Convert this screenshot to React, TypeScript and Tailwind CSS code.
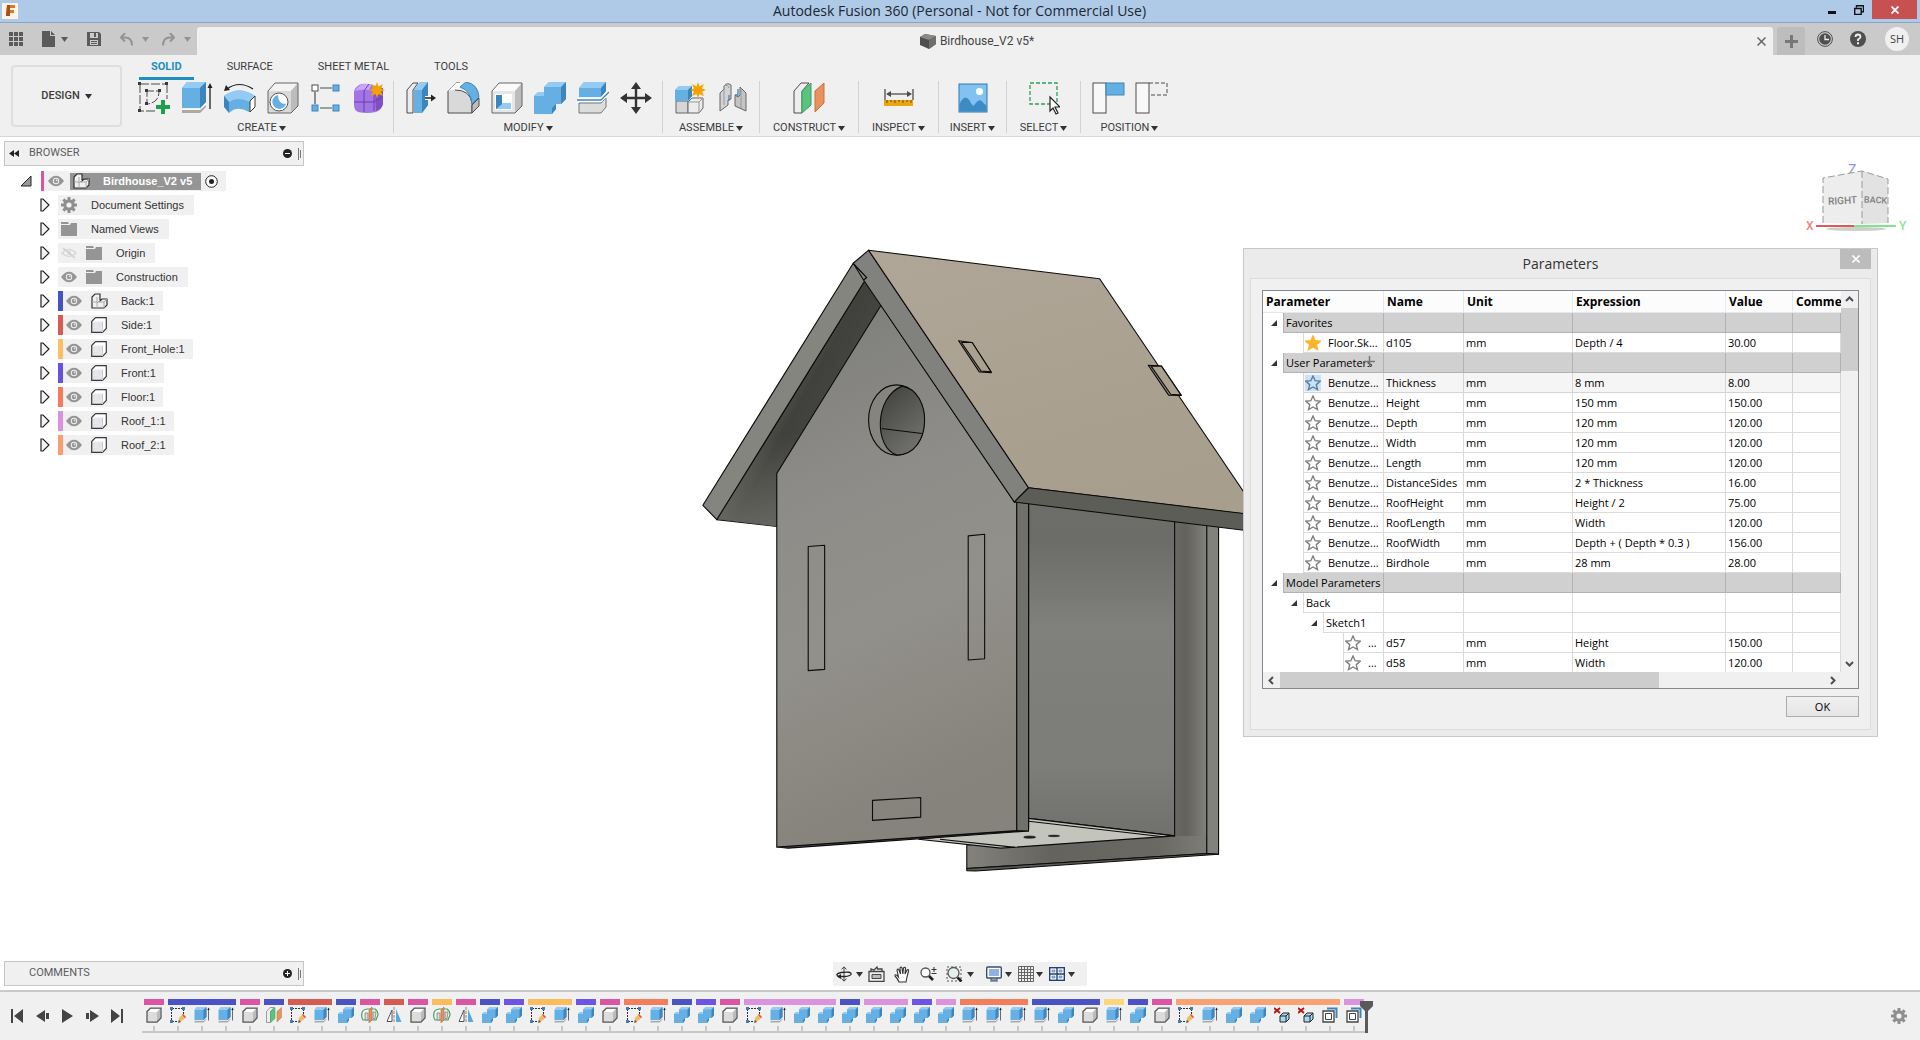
import React, { useState } from "react";

type IconProps = { size?: number };

interface ParamRow {
  kind: "group" | "node" | "param";
  depth: number;
  label: string;
  name?: string;
  expression?: string;
  value?: string;
  favorite?: boolean;
  hovered?: boolean;
}

const OUTLINE = "#4d4d4d";
const BLUE = "#65afe3";
const BLUE_LIGHT = "#93cbf5";
const BLUE_DARK = "#3d86bd";

const user = (name: string, expression: string, value: string, hovered = false): ParamRow => ({
  kind: "param",
  depth: 2,
  label: "Benutze...",
  name,
  expression,
  value,
  hovered,
});

const PARAMS: ParamRow[] = [
  { kind: "group", depth: 1, label: "Favorites" },
  { kind: "param", depth: 2, label: "Floor.Sk...", name: "d105", expression: "Depth / 4", value: "30.00", favorite: true },
  { kind: "group", depth: 1, label: "User Parameters" },
  user("Thickness", "8 mm", "8.00", true),
  user("Height", "150 mm", "150.00"),
  user("Depth", "120 mm", "120.00"),
  user("Width", "120 mm", "120.00"),
  user("Length", "120 mm", "120.00"),
  user("DistanceSides", "2 * Thickness", "16.00"),
  user("RoofHeight", "Height / 2", "75.00"),
  user("RoofLength", "Width", "120.00"),
  user("RoofWidth", "Depth + ( Depth * 0.3 )", "156.00"),
  user("Birdhole", "28 mm", "28.00"),
  { kind: "group", depth: 1, label: "Model Parameters" },
  { kind: "node", depth: 2, label: "Back" },
  { kind: "node", depth: 3, label: "Sketch1" },
  { kind: "param", depth: 4, label: "...", name: "d57", expression: "Height", value: "150.00" },
  { kind: "param", depth: 4, label: "...", name: "d58", expression: "Width", value: "120.00" },
];

/* ---------- small shared glyphs ---------- */

function Caret({ className = "" }: { className?: string }) {
  return (
    <svg width="7" height="5" viewBox="0 0 7 5" className={`shrink-0 ${className}`}>
      <path d="M0 0h7L3.5 5z" fill="currentColor" />
    </svg>
  );
}

function Eye({ hidden = false }: { hidden?: boolean }) {
  if (hidden) {
    return (
      <svg width="16" height="12" viewBox="0 0 16 12" className="shrink-0">
        <path d="M1 6Q8-1 15 6Q8 13 1 6Z" fill="none" stroke="#d8d8d8" strokeWidth="1.5" />
        <circle cx="8" cy="6" r="2" fill="#d8d8d8" />
        <path d="M2 1l12 10" stroke="#d0d0d0" strokeWidth="1.5" />
      </svg>
    );
  }
  return (
    <svg width="16" height="12" viewBox="0 0 16 12" className="shrink-0">
      <path d="M0 6Q8-4.500 16 6Q8 16.500 0 6Z" fill="#959595" />
      <circle cx="8" cy="6" r="3.2" fill="#f0f0f0" />
      <circle cx="8" cy="6" r="2.2" fill="#959595" />
      <circle cx="8.600" cy="5.400" r=".8" fill="#f0f0f0" />
    </svg>
  );
}

function Folder() {
  return (
    <svg width="16" height="14" viewBox="0 0 16 14" className="shrink-0">
      <path d="M0 0h7l1 2H0zM0 3h9l1-2h6v13H0z" fill="#959595" />
    </svg>
  );
}

function Gear({ size = 16 }: IconProps) {
  return (
    <svg width={size} height={size} viewBox="0 0 16 16" className="shrink-0">
      <circle cx="8" cy="8" r="4.2" fill="none" stroke="#8f8f8f" strokeWidth="3.2" />
      {[0, 45, 90, 135, 180, 225, 270, 315].map((a) => (
        <rect key={a} x="6.5" y="0" width="3" height="3.5" fill="#8f8f8f" transform={`rotate(${a} 8 8)`} />
      ))}
    </svg>
  );
}

function Cube() {
  return (
    <svg width="16" height="16" viewBox="0 0 16 16" className="shrink-0">
      <path d="M.7 4.5L4.5.7h10.800v10.800l-3.800 3.800H.7z" fill="#fff" />
      <path d="M.7 4.700h10.800v10.600H.7z" fill="#e4e4ea" />
      <path d="M.7 4.5L4.5.7h10.800v10.800l-3.800 3.800H.7z" fill="none" stroke="#3a3a3a" strokeWidth="1.2" />
      <path d="M11.5 4.700v10.600" fill="none" stroke="#c9c9c9" />
    </svg>
  );
}

function Assembly() {
  return (
    <svg width="17" height="17" viewBox="0 0 17 17" className="shrink-0">
      <path d="M1 4l3-3h5v6h4l3-1v6l-3 3H1z" fill="#f0f0f2" />
      <path d="M1 4l3-3h5v7l2-2h5v6l-3 3H1z" fill="none" stroke="#333" strokeWidth="1.2" />
      <path d="M1 9h5V4M6 9v6M7 9h6v6M9 7l-3 3M13 9l3-3" fill="none" stroke="#aaa" />
    </svg>
  );
}

/* ---------- ribbon icons ---------- */

function BlockShape({ front, top, side, stroke }: { front: string; top: string; side: string; stroke: string }) {
  return (
    <>
      <path d="M1 9l7-8h23v23l-7 7H1z" fill={front} />
      <path d="M1 9l7-8h23l-7 8z" fill={top} />
      <path d="M24 9l7-8v23l-7 7z" fill={side} />
      <path d="M1 9l7-8h23v23l-7 7H1z" fill="none" stroke={stroke} />
    </>
  );
}

function Burst() {
  return (
    <path
      d="M24 0l1.5 4.5L30 2l-2 4.5L32 8l-4 1.5 2 4.5-4.5-2L24 16l-1.5-4-4.500 2 2-4.500L16 8l4-1.500L18 2l4.500 2.500z"
      fill="#f5a100"
    />
  );
}

function SketchIcon({ size = 32 }: IconProps) {
  return (
    <svg width={size} height={size} viewBox="0 0 32 32">
      <path d="M2 2h27M2 2v27h16M29 2v15" fill="none" stroke={OUTLINE} strokeDasharray="9 2" />
      <path d="M8 9h13Q21 21 9 22V9" fill="none" stroke={OUTLINE} strokeDasharray="8 2" />
      <path d="M0 0h3v3H0zM27 0h3v3h-3zM0 27h3v3H0zM7 7h3v3H7zM20 7h3v3h-3zM7 20h3v3H7z" fill="#3a3a3a" />
      <path d="M23 18h4v5h5v4h-5v5h-4v-5h-5v-4h5z" fill="#1f9f4c" />
    </svg>
  );
}

function ExtrudeIcon({ size = 32 }: IconProps) {
  return (
    <svg width={size} height={size} viewBox="0 0 32 32">
      <path d="M1 27v4h18l6-6v-3l-6 5z" fill="#a9a9a9" />
      <path d="M1 27h18l6-6v2l-6 5H1z" fill="#fff" />
      <path d="M1 6l5-6h19v20l-6 6H1z" fill={BLUE} />
      <path d="M1 6l5-6h19l-6 6z" fill={BLUE_LIGHT} />
      <path d="M19 6l6-6v20l-6 6z" fill={BLUE_DARK} />
      <path d="M29 27V3" stroke="#222" strokeWidth="1.3" />
      <path d="M26.5 6L29 1l2.5 5z" fill="#222" />
    </svg>
  );
}

function RevolveIcon() {
  return (
    <svg width="34" height="32" viewBox="0 0 34 32">
      <path d="M1 14Q16 3 32 14l-1 13-5 3Q14 23 6 31l-4-8z" fill={BLUE} />
      <path d="M1 14Q16 3 32 14l-5 6Q15 14 6 20z" fill={BLUE_LIGHT} />
      <path d="M1 14l5 6v11l-5-6z" fill={BLUE_DARK} />
      <path d="M27 19l5-5v11l-5 5z" fill="#fff" stroke="#3a3a3a" />
      <path d="M4 7Q16-2 30 7" fill="none" stroke="#222" strokeWidth="1.2" />
      <path d="M1 9l2-6 4 5z" fill="#222" />
    </svg>
  );
}

function HoleIcon() {
  return (
    <svg width="32" height="32" viewBox="0 0 32 32">
      <BlockShape front="#d9d9d9" top="#f3f3f3" side="#bcbcbc" stroke="#666" />
      <circle cx="12" cy="20" r="9" fill="#fff" stroke="#555" />
      <path d="M11 13a7 7 0 1 0 8 9q-8 0-8-9z" fill={BLUE} />
    </svg>
  );
}

function PatternIcon() {
  return (
    <svg width="30" height="32" viewBox="0 0 30 32">
      <path d="M9 6h12M4 10v12M9 26h12" stroke={OUTLINE} strokeWidth="1.2" />
      <rect x="1" y="3" width="6" height="6" fill="#fff" stroke={OUTLINE} />
      <rect x="22" y="3" width="6" height="6" fill={BLUE} stroke={BLUE_DARK} />
      <rect x="1" y="23" width="6" height="6" fill={BLUE} stroke={BLUE_DARK} />
      <rect x="22" y="23" width="6" height="6" fill={BLUE} stroke={BLUE_DARK} />
    </svg>
  );
}

function FormIcon() {
  return (
    <svg width="32" height="32" viewBox="0 0 32 32">
      <path d="M1 11q0-5 5-8 4-2 10-1l14 4v16q-1 5-7 8-9 2-18 0-4-2-4-7z" fill="#a374e6" />
      <path d="M2 9q3-6 9-7h8l-3 6q-8-1-14 1z" fill="#c9a5f7" />
      <path d="M22 11q5-4 8-5v16q-1 5-7 7z" fill="#7f4fc4" />
      <path d="M1 20h20l9-6M11 9v21M11 9l5-7M21 11v18" fill="none" stroke="#6a3fb0" />
      <Burst />
    </svg>
  );
}

function PressPullIcon() {
  return (
    <svg width="32" height="32" viewBox="0 0 32 32">
      <path d="M2 8l6-7h5l-5 7v23H2z" fill="#ececec" stroke={OUTLINE} />
      <path d="M9 8l6-8h8v23l-6 8H9z" fill={BLUE} />
      <path d="M9 8l6-8h8l-6 8z" fill={BLUE_LIGHT} />
      <path d="M17 8l6-8v23l-6 8z" fill={BLUE_DARK} />
      <path d="M20 16h9" stroke="#fff" strokeWidth="4" />
      <path d="M20 16h8" stroke="#222" strokeWidth="1.5" />
      <path d="M26 12.5l5 3.5-5 3.5z" fill="#222" />
    </svg>
  );
}

function FilletIcon() {
  return (
    <svg width="33" height="32" viewBox="0 0 33 32">
      <path d="M1 9l8-8h4L8 8q15 0 17 13v10H1z" fill="#d9d9d9" stroke={OUTLINE} />
      <path d="M1 9l8-8h7l-5 6z" fill="#fff" />
      <path d="M13 5l6-5q12 2 13 15l-7 7Q24 9 13 5z" fill={BLUE} stroke={BLUE_DARK} />
      <path d="M25 23l7-7v8l-7 7z" fill="#bcbcbc" stroke={OUTLINE} />
    </svg>
  );
}

function ShellIcon() {
  return (
    <svg width="32" height="32" viewBox="0 0 32 32">
      <BlockShape front="#e6e6e6" top="#fafafa" side="#bcbcbc" stroke="#666" />
      <path d="M4 12h17v16H4z" fill="#fff" />
      <path d="M5 13h15v14H5z" fill={BLUE_LIGHT} />
      <path d="M5 13l6 6v3l-6 5z" fill={BLUE_DARK} />
      <path d="M11 13h9v8h-9z" fill="#fff" />
      <path d="M5 13h6v9l-6 5z" fill={BLUE_DARK} />
    </svg>
  );
}

function CombineIcon({ size = 32 }: IconProps) {
  return (
    <svg width={size} height={size} viewBox="0 0 32 32">
      <path d="M0 14l4-4h6V5l5-5h17v17l-5 5h-5v5l-4 5H0z" fill={BLUE} />
      <path d="M0 14l4-4h6v4zM10 5l5-5h17l-5 5z" fill={BLUE_LIGHT} />
      <path d="M27 5l5-5v17l-5 5zM18 26l4-4v5l-4 5z" fill={BLUE_DARK} />
    </svg>
  );
}

function SplitIcon() {
  return (
    <svg width="32" height="32" viewBox="0 0 32 32">
      <path d="M2 6l5-6h22v9l-5 6H2z" fill={BLUE} />
      <path d="M2 6l5-6h22l-5 6z" fill={BLUE_LIGHT} />
      <path d="M24 6l5-6v9l-5 6z" fill={BLUE_DARK} />
      <path d="M2 21h22l5-5v9l-5 6H2z" fill="#dcdcdc" stroke="#777" />
      <path d="M0 18h24l8-8" fill="none" stroke="#fff" strokeWidth="4" />
      <path d="M0 18h24l8-8" fill="none" stroke={BLUE_DARK} strokeWidth="1.3" />
    </svg>
  );
}

function MoveIcon() {
  return (
    <svg width="32" height="32" viewBox="0 0 32 32">
      <path d="M16 4v24M4 16h24" stroke="#333" strokeWidth="2.4" />
      <path d="M16 0l5 7H11zM16 32l5-7H11zM0 16l7-5v10zM32 16l-7-5v10z" fill="#333" />
    </svg>
  );
}

function NewComponentIcon() {
  return (
    <svg width="32" height="32" viewBox="0 0 32 32">
      <path d="M2 19h12v12H2z" fill="#d6d6d6" stroke="#666" />
      <path d="M14 20l4-4h11v10l-4 5H14z" fill="#ececec" stroke="#666" />
      <path d="M14 20h11v11M25 20l4-4" fill="none" stroke="#999" />
      <path d="M1 8l4-4h13v10l-4 5H1z" fill={BLUE} />
      <path d="M1 8l4-4h13l-4 4z" fill={BLUE_LIGHT} />
      <path d="M14 8l4-4v10l-4 5z" fill={BLUE_DARK} />
      <Burst />
    </svg>
  );
}

function JointIcon() {
  return (
    <svg width="32" height="32" viewBox="0 0 32 32">
      <path d="M3 11l4-4V4q3-4 7-1v14l-3 1v5l-8 6z" fill="#d3d3d3" stroke="#666" />
      <path d="M7 7v16M7 4q4-2 5 2" fill="none" stroke="#999" />
      <path d="M29 29l-11-5V13l3 2 2-2V5l6 6z" fill="#c4c4c4" stroke="#666" />
      <path d="M24 6v20" stroke="#999" />
      <path d="M12 13v6M21 7v6h-3" fill="none" stroke={BLUE_DARK} strokeWidth="1.3" />
    </svg>
  );
}

function PlaneIcon({ size = 32 }: IconProps) {
  return (
    <svg width={size} height={size} viewBox="0 0 32 32">
      <path d="M1 9l7-8h8l-7 8v22H1z" fill="#eee" stroke={OUTLINE} />
      <path d="M9 9l9-8v22l-9 8z" fill="#57c57e" stroke="#3d9b5f" />
      <path d="M22 9l9-8v20l-9 9z" fill="#e8925f" stroke="#c5723f" />
    </svg>
  );
}

function MeasureIcon() {
  return (
    <svg width="32" height="32" viewBox="0 0 32 32">
      <path d="M2 7v11M30 7v11" stroke={OUTLINE} strokeWidth="1.3" />
      <path d="M5 12h22" stroke={OUTLINE} strokeWidth="1.3" />
      <path d="M3 12l5-3v6zM29 12l-5-3v6z" fill={OUTLINE} />
      <rect x="1" y="18" width="29" height="6" fill="#eba412" />
      <path d="M4 18v3M8 18v2M12 18v3M16 18v2M20 18v3M24 18v2M28 18v3" stroke="#6b4a00" />
    </svg>
  );
}

function ImageIcon() {
  return (
    <svg width="32" height="32" viewBox="0 0 32 32">
      <rect x="2" y="2" width="28" height="28" fill="#82c2f2" stroke="#3576a6" />
      <circle cx="22.5" cy="9.5" r="3.5" fill="#fff" />
      <path d="M2.5 22q6-13 12 0l2 2q6-9 9-4l4 4v5.500h-27z" fill="#3c8bc4" />
    </svg>
  );
}

function SelectIcon() {
  return (
    <svg width="32" height="34" viewBox="0 0 32 34">
      <rect x="2" y="1" width="27" height="21" fill="none" stroke="#28a05a" strokeWidth="1.3" strokeDasharray="4 2" />
      <path d="M22 15v14l3-3 3 6 2-1-3-6h5z" fill="#fff" stroke="#222" strokeWidth="1.2" />
    </svg>
  );
}

function CaptureIcon({ reverted = false }: { reverted?: boolean }) {
  return (
    <svg width="33" height="32" viewBox="0 0 33 32">
      <rect x="1" y="1" width="13" height="30" fill="#f8f8f8" stroke={OUTLINE} />
      {reverted ? (
        <path d="M14 1h18v12H14" fill="none" stroke={OUTLINE} strokeDasharray="4 2" />
      ) : (
        <rect x="14" y="1" width="18" height="12" fill={BLUE} stroke={BLUE_DARK} />
      )}
    </svg>
  );
}

const RIBBON: { label: string; width: string; icons: React.ReactNode[] }[] = [
  {
    label: "CREATE",
    width: "w-[264px]",
    icons: [<SketchIcon />, <ExtrudeIcon />, <RevolveIcon />, <HoleIcon />, <PatternIcon />, <FormIcon />],
  },
  {
    label: "MODIFY",
    width: "w-[269px]",
    icons: [<PressPullIcon />, <FilletIcon />, <ShellIcon />, <CombineIcon />, <SplitIcon />, <MoveIcon />],
  },
  { label: "ASSEMBLE", width: "w-[97px]", icons: [<NewComponentIcon />, <JointIcon />] },
  { label: "CONSTRUCT", width: "w-[99px]", icons: [<PlaneIcon />] },
  { label: "INSPECT", width: "w-[80px]", icons: [<MeasureIcon />] },
  { label: "INSERT", width: "w-[68px]", icons: [<ImageIcon />] },
  { label: "SELECT", width: "w-[74px]", icons: [<SelectIcon />] },
  { label: "POSITION", width: "w-[97px]", icons: [<CaptureIcon />, <CaptureIcon reverted />] },
];

/* ---------- header ---------- */

function TitleBar() {
  return (
    <header className="flex h-[23px] items-center border-b border-[#86a6cc] bg-[#aecae7]">
      <div className="flex flex-1 pl-[2px]">
        <svg width="16" height="16" viewBox="0 0 16 16">
          <rect width="16" height="16" fill="#fdf3e6" />
          <path d="M5 2h8v3H8v2h4v3H8v3H4z" fill="#d9772b" />
          <path d="M5 2h3v11H4z" fill="#a94f14" />
        </svg>
      </div>
      <h1 className="font-['Open_Sans',sans-serif] text-[14px] leading-5 text-[#1c2733]">
        Autodesk Fusion 360 (Personal - Not for Commercial Use)
      </h1>
      <div className="flex flex-1 items-start justify-end self-stretch pr-[3px]">
        <button aria-label="Minimize" className="flex h-[19px] w-[26px] items-center justify-center">
          <svg width="8" height="8" viewBox="0 0 8 8">
            <path d="M0 5h8v3H0z" fill="#111" />
          </svg>
        </button>
        <button aria-label="Restore" className="flex h-[19px] w-[27px] items-center justify-center">
          <svg width="10" height="10" viewBox="0 0 10 10">
            <path d="M2.5 2.5V.7h7v6H7.5M.7 3.5h6.500v6H.7z" fill="none" stroke="#111" strokeWidth="1.4" />
          </svg>
        </button>
        <button aria-label="Close" className="flex h-[19px] w-[45px] items-center justify-center bg-[#c75050]">
          <svg width="8" height="8" viewBox="0 0 8 8">
            <path d="M.5.5l7 7M7.5.5l-7 7" stroke="#fff" strokeWidth="1.8" />
          </svg>
        </button>
      </div>
    </header>
  );
}

function QuickBar() {
  return (
    <div className="flex h-8 bg-[#cacaca]">
      <div className="flex w-[197px] items-center pl-[9px] text-[#5a5a5a]">
        <button aria-label="Data panel" className="mr-[19px]">
          <svg width="14" height="14" viewBox="0 0 14 14">
            <path
              d="M0 0h4v4H0zM5 0h4v4H5zM10 0h4v4h-4zM0 5h4v4H0zM5 5h4v4H5zM10 5h4v4h-4zM0 10h4v4H0zM5 10h4v4H5zM10 10h4v4h-4z"
              fill="currentColor"
            />
          </svg>
        </button>
        <button aria-label="File" className="mr-[19px] flex items-center gap-[6px]">
          <svg width="13" height="16" viewBox="0 0 13 16">
            <path d="M0 0h8v5h5v11H0zM9 0l4 4H9z" fill="currentColor" />
          </svg>
          <Caret />
        </button>
        <button aria-label="Save" className="mr-[19px]">
          <svg width="14" height="14" viewBox="0 0 14 14">
            <path d="M0 0h12l2 2v12H0zM3 1v5h8V1zM3 8v5h8V8z" fill="currentColor" fillRule="evenodd" />
            <path d="M7 1h2v4H7zM4 9h6v1H4zM4 11h6v1H4z" fill="currentColor" />
          </svg>
        </button>
        <button aria-label="Undo" className="mr-[13px] flex items-center gap-[9px] text-[#949494]">
          <svg width="13" height="13" viewBox="0 0 13 13">
            <path d="M5 0L1 4.500l4 4M1 4.500h4q7 0 7 8" fill="none" stroke="currentColor" strokeWidth="2" />
          </svg>
          <Caret />
        </button>
        <button aria-label="Redo" className="flex items-center gap-[9px] text-[#949494]">
          <svg width="13" height="13" viewBox="0 0 13 13">
            <path d="M8 0l4 4.500-4 4M12 4.500H8q-7 0-7 8" fill="none" stroke="currentColor" strokeWidth="2" />
          </svg>
          <Caret />
        </button>
      </div>
      <div className="mt-1 flex flex-1 items-center rounded-t-[3px] bg-[#f0f0f0] pr-[7px]">
        <div className="flex flex-1 items-center justify-center gap-1">
          <svg width="16" height="15" viewBox="0 0 16 15">
            <path d="M0 3l5-3 11 2v8l-7 5-9-4z" fill="#4f4f4f" />
            <path d="M0 3l5-3 11 2-7 4z" fill="#8a8a8a" />
            <path d="M9 6l7-4v8l-7 5z" fill="#6f6f6f" />
          </svg>
          <span className="font-['Roboto',sans-serif] text-[12px] text-[#444]">Birdhouse_V2 v5*</span>
        </div>
        <button aria-label="Close document">
          <svg width="9" height="9" viewBox="0 0 9 9">
            <path d="M.5.5l8 8M8.5.5l-8 8" stroke="#666" strokeWidth="1.5" />
          </svg>
        </button>
      </div>
      <div className="flex items-center pl-1">
        <button
          aria-label="New document"
          className="mr-3 mt-1 flex h-7 w-7 items-center justify-center rounded-t-[3px] bg-[#bdbdbd]"
        >
          <svg width="13" height="13" viewBox="0 0 13 13">
            <path d="M5 0h3v5h5v3H8v5H5V8H0V5h5z" fill="#777" />
          </svg>
        </button>
        <button aria-label="Job status" className="mr-[17px]">
          <svg width="16" height="16" viewBox="0 0 16 16">
            <circle cx="8" cy="8" r="7.4" fill="none" stroke="#4f4f4f" />
            <circle cx="8" cy="8" r="5.8" fill="#4f4f4f" />
            <path d="M8 4v4.500h4" fill="none" stroke="#eee" strokeWidth="1.3" />
          </svg>
        </button>
        <button aria-label="Help" className="mr-[19px]">
          <svg width="16" height="16" viewBox="0 0 16 16">
            <circle cx="8" cy="8" r="8" fill="#4f4f4f" />
            <path d="M5.5 6q0-2.500 2.500-2.500T10.5 6Q10.5 7 8 8.500V10" fill="none" stroke="#eee" strokeWidth="1.8" />
            <path d="M7 11.300h2v2H7z" fill="#eee" />
          </svg>
        </button>
        <button className="mr-[11px] h-6 w-6 rounded-full bg-[#f0f0f0] font-['Open_Sans',sans-serif] text-[11px] text-[#444]">
          SH
        </button>
      </div>
    </div>
  );
}

function Ribbon() {
  const [tab, setTab] = useState("SOLID");

  return (
    <div className="flex h-[82px] border-b border-[#d6d6d6] bg-[#f0f0f0] pl-[11px] font-['Roboto',sans-serif] text-[11px] text-[#3c3c3c]">
      <button className="mr-2 mt-[10px] flex h-[62px] w-[111px] items-center justify-center gap-[5px] rounded-[4px] border-2 border-[#dedede] font-medium">
        DESIGN <Caret className="text-[#333]" />
      </button>
      <div>
        <div className="flex gap-[21px] pl-[9px]">
          {["SOLID", "SURFACE", "SHEET METAL", "TOOLS"].map((t) => (
            <button
              key={t}
              onClick={() => setTab(t)}
              className={`mt-[2px] h-[23px] border-b-[3px] px-3 leading-5 ${
                t === tab ? "border-[#1e8fbf] font-bold text-[#1e8fbf]" : "border-transparent"
              }`}
            >
              {t}
            </button>
          ))}
        </div>
        <div className="mt-px flex">
          {RIBBON.map((g, i) => (
            <div
              key={g.label}
              className={`flex h-[52px] flex-col items-center ${g.width} ${
                i < RIBBON.length - 1 ? "border-r border-[#d2d2d2]" : ""
              }`}
            >
              <div className="flex h-[39px] shrink-0">
                {g.icons.map((icon, n) => (
                  <button key={n} aria-label={`${g.label} ${n + 1}`} className="flex w-[43px] items-start justify-center pt-px">
                    {icon}
                  </button>
                ))}
              </div>
              <button className="flex items-center gap-[2px] leading-4">
                {g.label} <Caret className="text-[#333]" />
              </button>
            </div>
          ))}
        </div>
      </div>
    </div>
  );
}

/* ---------- browser ---------- */

function PanelHeader({ title, open = false }: { title: string; open?: boolean }) {
  return (
    <div className="flex h-[25px] w-[300px] items-center border border-[#c6c6c6] bg-[#f0f0f0] font-['Roboto',sans-serif] text-[11px] text-[#5c5c5c]">
      <span className="flex w-6 pl-1">
        {open && (
          <svg width="10" height="7" viewBox="0 0 10 7">
            <path d="M5 0v7L0 3.500zM10 0v7L5 3.500z" fill="#222" />
          </svg>
        )}
      </span>
      <h2 className="flex-1">{title}</h2>
      <button aria-label={open ? "Hide browser" : "Show comments"}>
        <svg width="9" height="9" viewBox="0 0 9 9">
          <circle cx="4.5" cy="4.5" r="4.5" fill="#222" />
          <path d={open ? "M2 4.500h5" : "M2 4.500h5M4.500 2v5"} stroke="#fff" />
        </svg>
      </button>
      <svg width="4" height="12" viewBox="0 0 4 12" className="ml-[6px] mr-[1px]">
        <path d="M.5 0v12M2.500 2v8" stroke="#777" />
      </svg>
    </div>
  );
}

function Expander() {
  return (
    <button aria-label="Expand" className="mr-[8px]">
      <svg width="10" height="14" viewBox="0 0 10 14">
        <path d="M1 1h2l6 6-6 6H1z" fill="#f4f4f4" stroke="#222" strokeWidth="1.2" />
      </svg>
    </button>
  );
}

const COMPONENTS = [
  { label: "Back:1", bar: "bg-[#4552c4]", assembly: true },
  { label: "Side:1", bar: "bg-[#d65b50]" },
  { label: "Front_Hole:1", bar: "bg-[#fbc063]" },
  { label: "Front:1", bar: "bg-[#6a50e2]" },
  { label: "Floor:1", bar: "bg-[#f47b5b]" },
  { label: "Roof_1:1", bar: "bg-[#da92df]" },
  { label: "Roof_2:1", bar: "bg-[#f89e73]" },
];

function Browser() {
  return (
    <aside className="absolute left-1 top-[4px]">
      <PanelHeader title="BROWSER" open />
      <ul className="mt-[5px] flex flex-col gap-1 font-['Liberation_Sans',sans-serif] text-[11px] leading-5 text-[#333]">
        <li className="flex h-5 items-center pl-4">
          <button aria-label="Collapse" className="mr-[9px]">
            <svg width="12" height="12" viewBox="0 0 12 12">
              <path d="M1 11L11 1v10z" fill="#999" stroke="#222" />
            </svg>
          </button>
          <div className="flex h-5 items-center bg-[#f0f0f0] pr-2">
            <span className="mr-1 h-5 w-[3px] bg-[#d9559d]" />
            <Eye />
            <span className="ml-[6px] mr-[4px] flex h-[17px] items-center bg-[#959595] pl-[3px] pr-[9px] font-bold text-white">
              <Assembly />
              <span className="ml-[13px]">Birdhouse_V2 v5</span>
            </span>
            <svg width="13" height="13" viewBox="0 0 13 13">
              <circle cx="6.5" cy="6.5" r="5.8" fill="#fff" stroke="#222" />
              <circle cx="6.5" cy="6.5" r="2.5" fill="#222" />
            </svg>
          </div>
        </li>
        {["Document Settings", "Named Views"].map((label, i) => (
          <li key={label} className="flex h-5 items-center pl-9">
            <Expander />
            <div className="flex h-5 items-center gap-[14px] bg-[#f0f0f0] pl-[3px] pr-[10px]">
              {i === 0 ? <Gear /> : <Folder />}
              {label}
            </div>
          </li>
        ))}
        {["Origin", "Construction"].map((label, i) => (
          <li key={label} className="flex h-5 items-center pl-9">
            <Expander />
            <div className="flex h-5 items-center bg-[#f0f0f0] pl-[3px] pr-[10px]">
              <Eye hidden={i === 0} />
              <span className="ml-[9px] mr-[14px]">
                <Folder />
              </span>
              {label}
            </div>
          </li>
        ))}
        {COMPONENTS.map((c) => (
          <li key={c.label} className="flex h-5 items-center pl-9">
            <Expander />
            <div className="flex h-5 items-center bg-[#f0f0f0] pr-2">
              <span className={`mr-[3px] h-5 w-[5px] ${c.bar}`} />
              <Eye />
              <span className="ml-[9px] mr-[13px] flex w-[17px]">{c.assembly ? <Assembly /> : <Cube />}</span>
              {c.label}
            </div>
          </li>
        ))}
      </ul>
    </aside>
  );
}

/* ---------- model ---------- */

function Birdhouse() {
  return (
    <svg
      className="absolute left-[690px] top-[103px] h-[640px] w-[560px]"
      viewBox="0 0 1568 1568"
      preserveAspectRatio="none"
      role="img"
      aria-label="Birdhouse model"
    >
      <defs>
        <linearGradient id="front" x1="0" y1="0" x2=".2" y2="1">
          <stop offset="0" stopColor="#7c7c79" />
          <stop offset=".4" stopColor="#8e8d89" />
          <stop offset=".65" stopColor="#92908a" />
          <stop offset="1" stopColor="#85837b" />
        </linearGradient>
        <linearGradient id="roof" x1="0" y1="0" x2=".4" y2="1">
          <stop offset="0" stopColor="#b0a697" />
          <stop offset="1" stopColor="#a89e8e" />
        </linearGradient>
        <linearGradient id="under" gradientUnits="userSpaceOnUse" x1="200" y1="380" x2="390" y2="500">
          <stop offset="0" stopColor="#62625e" />
          <stop offset=".45" stopColor="#40403c" />
          <stop offset="1" stopColor="#474743" />
        </linearGradient>
        <linearGradient id="underFoot" gradientUnits="userSpaceOnUse" x1="0" y1="480" x2="0" y2="700">
          <stop offset="0" stopColor="#7a7a75" stopOpacity="0" />
          <stop offset="1" stopColor="#7a7a75" stopOpacity=".6" />
        </linearGradient>
        <linearGradient id="inner" x1="0" y1="0" x2="0" y2="1">
          <stop offset="0" stopColor="#6d6e6a" />
          <stop offset=".12" stopColor="#6c6d69" />
          <stop offset=".38" stopColor="#80817c" />
          <stop offset=".8" stopColor="#7c7d78" />
          <stop offset="1" stopColor="#70716c" />
        </linearGradient>
        <linearGradient id="back" x1="0" y1="0" x2="1" y2="0">
          <stop offset="0" stopColor="#696863" />
          <stop offset=".35" stopColor="#62615c" />
          <stop offset="1" stopColor="#81807a" />
        </linearGradient>
        <linearGradient id="backFoot" x1="0" y1="0" x2="1" y2="0">
          <stop offset="0" stopColor="#83827b" />
          <stop offset=".35" stopColor="#64635d" />
          <stop offset=".8" stopColor="#6a6963" />
          <stop offset="1" stopColor="#7d7c75" />
        </linearGradient>
        <linearGradient id="hole" x1="0" y1="0" x2=".6" y2="1">
          <stop offset="0" stopColor="#3e3e3b" />
          <stop offset="1" stopColor="#70706c" />
        </linearGradient>
      </defs>

      <g stroke="#0b0b0b" strokeWidth="1.1" strokeLinejoin="round">
        {/* back panel */}
        <path d="M1357 680L1447 690V1503L775 1540V1482L1357 1458Z" fill="url(#backFoot)" vectorEffect="non-scaling-stroke" />
        <path d="M1358 680H1446V1460H1358Z" fill="url(#back)" stroke="none" />
        <path d="M1447 690L1480 694V1505L1447 1503Z" fill="#81827c" vectorEffect="non-scaling-stroke" />
        <path d="M775 1540L1447 1503L1480 1505L800 1546L775 1545Z" fill="#5c5c57" vectorEffect="non-scaling-stroke" />

        {/* side wall seen from inside, then the floor plate */}
        <path d="M948 640L1357 684V1460L948 1417Z" fill="url(#inner)" vectorEffect="non-scaling-stroke" />
        <path d="M948 1417L1357 1460L870 1490L640 1468L948 1440Z" fill="#c3c4bb" vectorEffect="non-scaling-stroke" />
        <path d="M948 1424L1325 1462" vectorEffect="non-scaling-stroke" />
        <path d="M700 1468L910 1488" vectorEffect="non-scaling-stroke" />
        <ellipse cx="951" cy="1463" rx="17" ry="3" fill="#222" />
        <ellipse cx="1019" cy="1460" rx="16" ry="2" fill="#222" />

        {/* left roof board */}
        <path d="M492 96L540 160L243 572V702L75 685Z" fill="url(#under)" vectorEffect="non-scaling-stroke" />
        <path d="M492 96L540 160L243 572V702L75 685Z" fill="url(#underFoot)" stroke="none" />
        <path d="M457 57L495 92L75 685L36 650Z" fill="#85857f" vectorEffect="non-scaling-stroke" />

        {/* front wall */}
        <path d="M243 1487L915 1447L948 1448L275 1490Z" fill="#55544f" vectorEffect="non-scaling-stroke" />
        <path d="M535 160L908 642H915V1447L243 1487V572Z" fill="url(#front)" vectorEffect="non-scaling-stroke" />
        <path d="M915 642L948 645V1448L915 1447Z" fill="#71716b" vectorEffect="non-scaling-stroke" />
        <path d="M331 751L377 748V1052L331 1055ZM779 725L825 721V1026L779 1029ZM511 1373L646 1366V1414L511 1422Z" fill="none" vectorEffect="non-scaling-stroke" />

        {/* entrance hole */}
        <ellipse cx="578" cy="441" rx="78" ry="86" fill="#85847f" vectorEffect="non-scaling-stroke" />
        <path d="M594 358C515 385 515 510 580 527C680 525 680 370 594 358Z" fill="url(#hole)" vectorEffect="non-scaling-stroke" />
        <path d="M537 462L649 474" vectorEffect="non-scaling-stroke" />

        {/* right roof board */}
        <path d="M500 25L948 607L908 642L486 98L495 92L457 57Z" fill="#81817d" vectorEffect="non-scaling-stroke" />
        <path d="M457 57L486 98" fill="none" vectorEffect="non-scaling-stroke" />
        <path d="M500 25L1147 95L1568 640V673L948 607Z" fill="url(#roof)" vectorEffect="non-scaling-stroke" />
        <path d="M948 607L1568 672V713L908 642Z" fill="#5d5d58" vectorEffect="non-scaling-stroke" />
        <path d="M752 247L790 251L844 325L810 323Z" fill="#8d8576" vectorEffect="non-scaling-stroke" />
        <path d="M760 251L790 251L843 323L815 321Z" fill="#aaa191" vectorEffect="non-scaling-stroke" />
        <path d="M1283 307L1320 309L1376 381L1340 380Z" fill="#8d8576" vectorEffect="non-scaling-stroke" />
        <path d="M1291 309L1320 309L1375 380L1346 378Z" fill="#aaa191" vectorEffect="non-scaling-stroke" />
      </g>
    </svg>
  );
}

function ViewCube() {
  return (
    <svg className="absolute right-3 top-[25px]" width="104" height="72" viewBox="0 0 104 72" role="img" aria-label="View cube">
      <g fontFamily="Roboto, sans-serif">
        <text x="44" y="13" fontSize="14" fill="#8f93e0">Z</text>
        <path d="M19 16L58 9V62L19 61Z" fill="#ededed" />
        <path d="M58 9L84 17V61L58 62Z" fill="#e2e2e2" />
        <path d="M19 61V16L58 9L84 17V61M58 9V62" fill="none" stroke="#9a9a9a" strokeDasharray="7 3" />
        <ellipse cx="52" cy="67" rx="30" ry="2" fill="#c9cfc9" />
        <path d="M12 64H50" stroke="#e05858" strokeWidth="2" />
        <path d="M50 64H92" stroke="#7fe48a" strokeWidth="2" />
        <text x="2" y="68" fontSize="12" fontWeight="500" fill="#ee8585">X</text>
        <text x="95" y="68" fontSize="12" fontWeight="500" fill="#8be694">Y</text>
        <text x="24" y="42" fontSize="10" fontWeight="500" fill="#808080" transform="rotate(-3 38 38)">RIGHT</text>
        <text x="60" y="41" fontSize="9" fontWeight="500" fill="#808080" transform="rotate(3 70 38)">BACK</text>
      </g>
    </svg>
  );
}

/* ---------- parameters dialog ---------- */

function Star({ favorite, hovered }: { favorite?: boolean; hovered?: boolean }) {
  return (
    <svg width="16" height="16" viewBox="0 0 16 16" className={hovered ? "bg-[#c9e2f8]" : ""}>
      <path
        d="M8 1l2.100 4.700 5.100.5-3.900 3.400 1.200 5L8 12l-4.500 2.600 1.200-5L.8 6.200l5.100-.5z"
        fill={favorite ? "#fdb32b" : "none"}
        stroke={favorite ? "#fdb32b" : hovered ? "#5d7f9e" : "#808080"}
        strokeWidth="1.4"
      />
    </svg>
  );
}

const INDENT = ["", "w-5", "w-10", "w-[60px]", "w-20"];

function ParameterRow({ row }: { row: ParamRow }) {
  const group = row.kind === "group";
  const tone = group ? "bg-[#d0d0d0] border-[#b2b2b2]" : row.hovered ? "bg-[#f5f5f5] border-[#d4d4d4]" : "border-[#dadada]";

  return (
    <tr className="h-5">
      <td className="p-0">
        <div className="flex h-5">
          <span className={`flex shrink-0 items-center justify-end pr-[6px] ${INDENT[row.depth]}`}>
            {row.kind !== "param" && (
              <svg width="6" height="6" viewBox="0 0 6 6">
                <path d="M0 6L6 0v6z" fill="#333" />
              </svg>
            )}
          </span>
          <span
            className={`flex min-w-0 flex-1 items-center whitespace-nowrap border-b border-l border-r ${tone} ${
              row.kind === "param" ? "pl-[1px]" : "pl-[2px]"
            }`}
          >
            {row.kind === "param" && (
              <button aria-label={`Favorite ${row.name}`} className="mr-[7px]">
                <Star favorite={row.favorite} hovered={row.hovered} />
              </button>
            )}
            {row.label}
          </span>
        </div>
      </td>
      {[row.name, row.name && "mm", row.expression, row.value, ""].map((cell, i) => (
        <td key={i} className={`whitespace-nowrap border-b border-r px-[2px] py-0 ${tone}`}>
          {cell}
        </td>
      ))}
    </tr>
  );
}

function Chevron({ d }: { d: string }) {
  return (
    <svg width="9" height="9" viewBox="0 0 9 9">
      <path d={d} fill="none" stroke="#505050" strokeWidth="2" />
    </svg>
  );
}

function ParametersDialog() {
  return (
    <section
      role="dialog"
      aria-labelledby="params-title"
      className="absolute right-[42px] top-[111px] w-[635px] border border-[#c8c8c8] bg-[#ebebeb] px-[6px] pb-[6px] font-['Open_Sans',sans-serif] text-[11px] text-black"
    >
      <div className="relative flex h-[29px] items-center justify-center">
        <h2 id="params-title" className="text-[14px] leading-5 text-[#333]">Parameters</h2>
        <button aria-label="Close" className="absolute right-0 top-0 flex h-5 w-[31px] items-center justify-center bg-[#bcbcbc]">
          <svg width="8" height="8" viewBox="0 0 8 8">
            <path d="M.5.5l7 7M7.5.5l-7 7" stroke="#fff" strokeWidth="1.6" />
          </svg>
        </button>
      </div>
      <div className="border border-[#dcdcdc] bg-[#f0f0f0] px-[11px] pb-3 pt-[11px]">
        <div className="border border-[#828790] bg-white">
          <div className="flex h-[381px]">
            <div className="relative flex-1 overflow-hidden">
              <table className="w-full table-fixed border-separate border-spacing-0 leading-[19px]">
                <colgroup>
                  <col className="w-[121px]" />
                  <col className="w-20" />
                  <col className="w-[109px]" />
                  <col className="w-[153px]" />
                  <col className="w-[67px]" />
                  <col />
                </colgroup>
                <thead>
                  <tr className="h-[22px] text-left text-[12px]">
                    {["Parameter", "Name", "Unit", "Expression", "Value"].map((h) => (
                      <th key={h} className="border-b border-r border-[#e3e8f0] bg-[#fcfcfd] py-0 pl-[3px] pr-0 font-bold">
                        {h}
                      </th>
                    ))}
                    <th className="border-b border-[#e3e8f0] bg-[#fcfcfd] py-0 pl-[3px] pr-0 font-bold">Comme</th>
                  </tr>
                </thead>
                <tbody>
                  {PARAMS.map((row, i) => (
                    <ParameterRow key={i} row={row} />
                  ))}
                </tbody>
              </table>
              {/* crosshair pointer */}
              <svg className="absolute left-[101px] top-[65px]" width="11" height="11" viewBox="0 0 11 11">
                <path d="M5.500 0v11M0 5.500h11" stroke="#777" strokeWidth="1.5" />
              </svg>
            </div>
            <div className="flex w-[17px] flex-col items-center bg-[#f0f0f0]">
              <span className="flex h-[17px] items-center">
                <Chevron d="M1 6l3.500-3.500L8 6" />
              </span>
              <span className="h-[63px] w-full bg-[#cdcdcd]" />
              <span className="mt-auto flex h-[17px] items-center">
                <Chevron d="M1 3l3.500 3.500L8 3" />
              </span>
            </div>
          </div>
          <div className="flex h-4 items-center bg-[#f0f0f0]">
            <span className="flex w-[17px] justify-center">
              <Chevron d="M6 1L2.500 4.500L6 8" />
            </span>
            <span className="h-4 w-[379px] bg-[#cdcdcd]" />
            <span className="ml-auto mr-[17px] flex w-[17px] justify-center">
              <Chevron d="M3 1l3.500 3.500L3 8" />
            </span>
          </div>
        </div>
        <div className="mt-[7px] flex justify-end">
          <button className="h-[21px] w-[73px] border border-[#acacac] bg-gradient-to-b from-[#f0f0f0] to-[#e5e5e5] leading-[18px]">
            OK
          </button>
        </div>
      </div>
    </section>
  );
}

/* ---------- navigation bar ---------- */

function NavBar() {
  return (
    <nav className="absolute bottom-[4px] left-1/2 flex h-6 w-[254px] -translate-x-1/2 items-center bg-[#f0f0f0] pl-[3px] text-[#333]">
      <button aria-label="Orbit" className="flex items-center gap-[4px]">
        <svg width="16" height="16" viewBox="0 0 16 16">
          <path d="M8 1v14M5.500 3.500L8 .8l2.500 2.700M5.500 12.500L8 15.200l2.500-2.700" fill="none" stroke="#444" />
          <path d="M3 11Q-2 8 5 6.500 16 5 15 8.500 14 10 9 10.500H3" fill="none" stroke="#222" strokeWidth="1.3" />
          <path d="M5 8l-4 2.500L5 13z" fill="#222" />
        </svg>
        <Caret />
      </button>
      <button aria-label="Look at" className="ml-[5px]">
        <svg width="17" height="16" viewBox="0 0 17 16">
          <path d="M1 5.500h15v10H1zM3 5V3l3 1 3-3 .5 2H14v2" fill="none" stroke="#444" strokeWidth="1.3" />
          <path d="M4 8.500h9v4H4z" fill="#bbb" stroke="#444" />
        </svg>
      </button>
      <button aria-label="Pan" className="ml-[9px]">
        <svg width="17" height="17" viewBox="0 0 17 17">
          <path
            d="M5 16Q4 13 1 10q-.5-2 2-.7L4.500 11 3 4q1-2 2 0l1.500 4L6 2q1-2 2 0l.8 6L9.500 2q1.500-1.500 2 0L11 8l2-4q2-1 1.500 1L13 11l-1 5z"
            fill="#fff"
            stroke="#333"
            strokeWidth="1.1"
          />
        </svg>
      </button>
      <button aria-label="Zoom" className="ml-[9px]">
        <svg width="17" height="16" viewBox="0 0 17 16">
          <circle cx="5.500" cy="6.500" r="4.500" fill="#fff" stroke="#555" strokeWidth="1.3" />
          <path d="M9 10l4 4" stroke="#222" strokeWidth="2.6" />
          <path d="M14 1v5M11.500 3.500h5M11.500 7.500h5" stroke="#333" />
        </svg>
      </button>
      <button aria-label="Fit" className="ml-[9px] flex items-center gap-[4px]">
        <svg width="17" height="16" viewBox="0 0 17 16">
          <rect x="1" y="1" width="14" height="14" fill="none" stroke="#555" strokeDasharray="2 2" />
          <circle cx="7.500" cy="7" r="5.500" fill="#e4f0ee" stroke="#555" strokeWidth="1.3" />
          <path d="M11.500 11.500l4 4" stroke="#222" strokeWidth="2.6" />
        </svg>
        <Caret />
      </button>
      <button aria-label="Display settings" className="ml-[12px] flex items-center gap-[3px]">
        <svg width="16" height="16" viewBox="0 0 16 16">
          <rect x=".7" y="1" width="14.600" height="11" rx="1" fill="#fff" stroke="#38506e" strokeWidth="1.4" />
          <rect x="3" y="3" width="10" height="7" fill="#8fb2e0" />
          <path d="M5 12v2h6v-2M4 15h8" fill="none" stroke="#38506e" />
        </svg>
        <Caret />
      </button>
      <button aria-label="Grid and snaps" className="ml-[6px] flex items-center gap-[2px]">
        <svg width="16" height="16" viewBox="0 0 16 16">
          <path
            d="M.5.500h15v15H.5zM3.500 0v16M6.500 0v16M9.500 0v16M12.500 0v16M0 3.500h16M0 6.500h16M0 9.500h16M0 12.500h16"
            fill="none"
            stroke="#666"
          />
        </svg>
        <Caret />
      </button>
      <button aria-label="Viewports" className="ml-[6px] flex items-center gap-[3px]">
        <svg width="16" height="14" viewBox="0 0 16 14">
          <rect x=".7" y=".7" width="14.600" height="12.600" fill="#fff" stroke="#24406e" strokeWidth="1.4" />
          <path d="M8 0v14M0 7h16" stroke="#24406e" strokeWidth="1.4" />
          <path d="M3 3h3v2H3zM10 3h3v2h-3zM3 9h3v2H3zM10 9h3v2h-3z" fill="#a9c6ea" stroke="#4a74ad" strokeWidth=".6" />
        </svg>
        <Caret />
      </button>
    </nav>
  );
}

/* ---------- timeline ---------- */

function BodyStep() {
  return (
    <svg width="16" height="16" viewBox="0 0 32 32">
      <path d="M2 9l7-7h21v20l-8 8H2z" fill="#dcdcdc" />
      <path d="M4 10l6-6h18l-6 6z" fill="#fff" />
      <path d="M22 10l6-6v17l-6 7z" fill="#bbb" />
      <path d="M2 9l7-7h21v20l-8 8H2z" fill="none" stroke="#555" strokeWidth="2.5" />
    </svg>
  );
}

function SketchStep() {
  return (
    <svg width="16" height="16" viewBox="0 0 16 16">
      <path d="M2 1.500h11M1.500 2v12M13.500 2v7M2 14.500h6" fill="none" stroke="#333" strokeDasharray="2 1" />
      <path d="M0 0h3v3H0zM12 0h3v3h-3zM0 13h3v3H0z" fill="#3d7fb5" />
      <path d="M8 15l1-4 4-4 3 3-4 4z" fill="#f3b95f" />
      <path d="M13 7l3 3-1 1-3-3z" fill="#d9534a" />
      <path d="M8 16l1-3 2 2z" fill="#555" />
    </svg>
  );
}

function JointStep() {
  return (
    <svg width="18" height="16" viewBox="0 0 18 16">
      <path d="M1 6q0-3 5-4h8q3 2 3 6l-2 5H2q-2-3-1-7z" fill="#f2f5f2" stroke="#45a168" strokeWidth="1.2" />
      <path d="M4 6h3v7H4zM12 5h3l-1 7h-2z" fill="#d5dcd6" stroke="#777" strokeWidth=".7" />
      <path d="M8 3l3-3v13l-3 3z" fill="#e8925f" stroke="#b8632f" strokeWidth=".6" />
    </svg>
  );
}

function MirrorStep() {
  return (
    <svg width="16" height="16" viewBox="0 0 16 16">
      <path d="M6 3v11.500H1z" fill="#fff" stroke="#555" />
      <path d="M10 2v13h5.500z" fill="#5aa9de" />
      <path d="M8 0v16" stroke="#888" strokeDasharray="3 1" />
    </svg>
  );
}

function DeleteStep() {
  return (
    <svg width="16" height="16" viewBox="0 0 16 16">
      <path d="M0 1l6 5M6 1L0 6" stroke="#b31212" strokeWidth="1.8" />
      <path d="M6 9l3-3h6v6l-3 3H6z" fill="#a5dcf3" stroke="#222" />
      <path d="M6 9h6v6M12 9l3-3" fill="none" stroke="#222" />
    </svg>
  );
}

function OffsetStep() {
  return (
    <svg width="16" height="16" viewBox="0 0 16 16">
      <path d="M1 4h11v11H1z" fill="#fff" stroke="#444" strokeWidth="1.3" />
      <path d="M3.500 6.500h6v6h-6z" fill="#fff" stroke="#444" />
      <path d="M5 1.500h9.500V11" fill="none" stroke="#3d86bd" strokeWidth="2" />
    </svg>
  );
}

const STEP_ICONS: Record<string, React.ReactNode> = {
  b: <BodyStep />,
  s: <SketchStep />,
  e: <ExtrudeIcon size={16} />,
  p: <PlaneIcon size={16} />,
  c: <CombineIcon size={16} />,
  j: <JointStep />,
  m: <MirrorStep />,
  d: <DeleteStep />,
  o: <OffsetStep />,
};

const PINK = "bg-[#dc55a2]";
const NAVY = "bg-[#4a52c6]";
const RED = "bg-[#d65c52]";
const AMBER = "bg-[#fbbd5c]";
const VIOLET = "bg-[#6d53e6]";
const CORAL = "bg-[#f47d5c]";
const LILAC = "bg-[#db92df]";
const PEACH = "bg-[#f8a172]";

// each run is one colour bar with the features below it
const RUNS: [string, string][] = [
  [PINK, "b"],
  [NAVY, "see"],
  [PINK, "b"],
  [NAVY, "p"],
  [RED, "se"],
  [NAVY, "c"],
  [PINK, "j"],
  [RED, "m"],
  [PINK, "b"],
  [AMBER, "j"],
  [PINK, "m"],
  [NAVY, "c"],
  [VIOLET, "c"],
  [AMBER, "se"],
  [VIOLET, "c"],
  [PINK, "b"],
  [CORAL, "se"],
  [NAVY, "c"],
  [VIOLET, "c"],
  [PINK, "b"],
  [LILAC, "secc"],
  [NAVY, "c"],
  [LILAC, "cc"],
  [VIOLET, "c"],
  [LILAC, "c"],
  [CORAL, "eee"],
  [NAVY, "ecb"],
  ["bg-[#fbd779]", "e"],
  [NAVY, "c"],
  [PINK, "b"],
  [PEACH, "seccddo"],
  [LILAC, "o"],
];

const PLAYBACK = [
  { label: "Go to start", d: "M0 1h2v14H0zM12 1v14L3 8z" },
  { label: "Step back", d: "M9 2v12L0 8zM10 5h3v6h-3z" },
  { label: "Play", d: "M1 1l11 7-11 7z" },
  { label: "Step forward", d: "M4 2v12l9-6zM0 5h3v6H0z" },
  { label: "Go to end", d: "M0 1v14l9-7zM10 1h2v14h-2z" },
];

function Timeline() {
  return (
    <footer className="flex h-[50px] border-t-2 border-[#c8c8c8] bg-[#f0f0f0]">
      <div className="flex w-[142px] items-center gap-[12px] pl-[11px]">
        {PLAYBACK.map((p) => (
          <button key={p.label} aria-label={p.label} className="flex">
            <svg width="13" height="16" viewBox="0 0 13 16">
              <path d={p.d} fill="#444" />
            </svg>
          </button>
        ))}
      </div>
      <div className="flex pt-[7px]">
        {RUNS.map(([color, steps], i) => (
          <div key={i}>
            <div className={`mx-[2px] h-[6px] ${color}`} />
            <div className="flex border-b-2 border-[#c8c8c8]">
              {steps.split("").map((s, n) => (
                <div key={n} className="flex w-6 flex-col items-center">
                  <button aria-label="Feature" className="mt-px flex h-[18px] items-center justify-center">
                    {STEP_ICONS[s]}
                  </button>
                  <span className="mt-[2px] h-[5px] w-[2px] bg-[#c8c8c8]" />
                </div>
              ))}
            </div>
          </div>
        ))}
        <svg width="13" height="34" viewBox="0 0 13 34" className="-ml-[6px]">
          <path d="M0 2h13v5L8 12v22H5V12L0 7z" fill="#5a5a5a" />
        </svg>
      </div>
      <button aria-label="Timeline settings" className="ml-auto mr-[13px] self-center">
        <Gear />
      </button>
    </footer>
  );
}

export default function App() {
  return (
    <div className="flex min-h-screen flex-col overflow-hidden bg-white">
      <TitleBar />
      <QuickBar />
      <Ribbon />
      <main className="relative min-h-[600px] flex-1 overflow-hidden">
        <Birdhouse />
        <Browser />
        <ViewCube />
        <ParametersDialog />
        <div className="absolute bottom-[4px] left-1">
          <PanelHeader title="COMMENTS" />
        </div>
        <NavBar />
      </main>
      <Timeline />
    </div>
  );
}
